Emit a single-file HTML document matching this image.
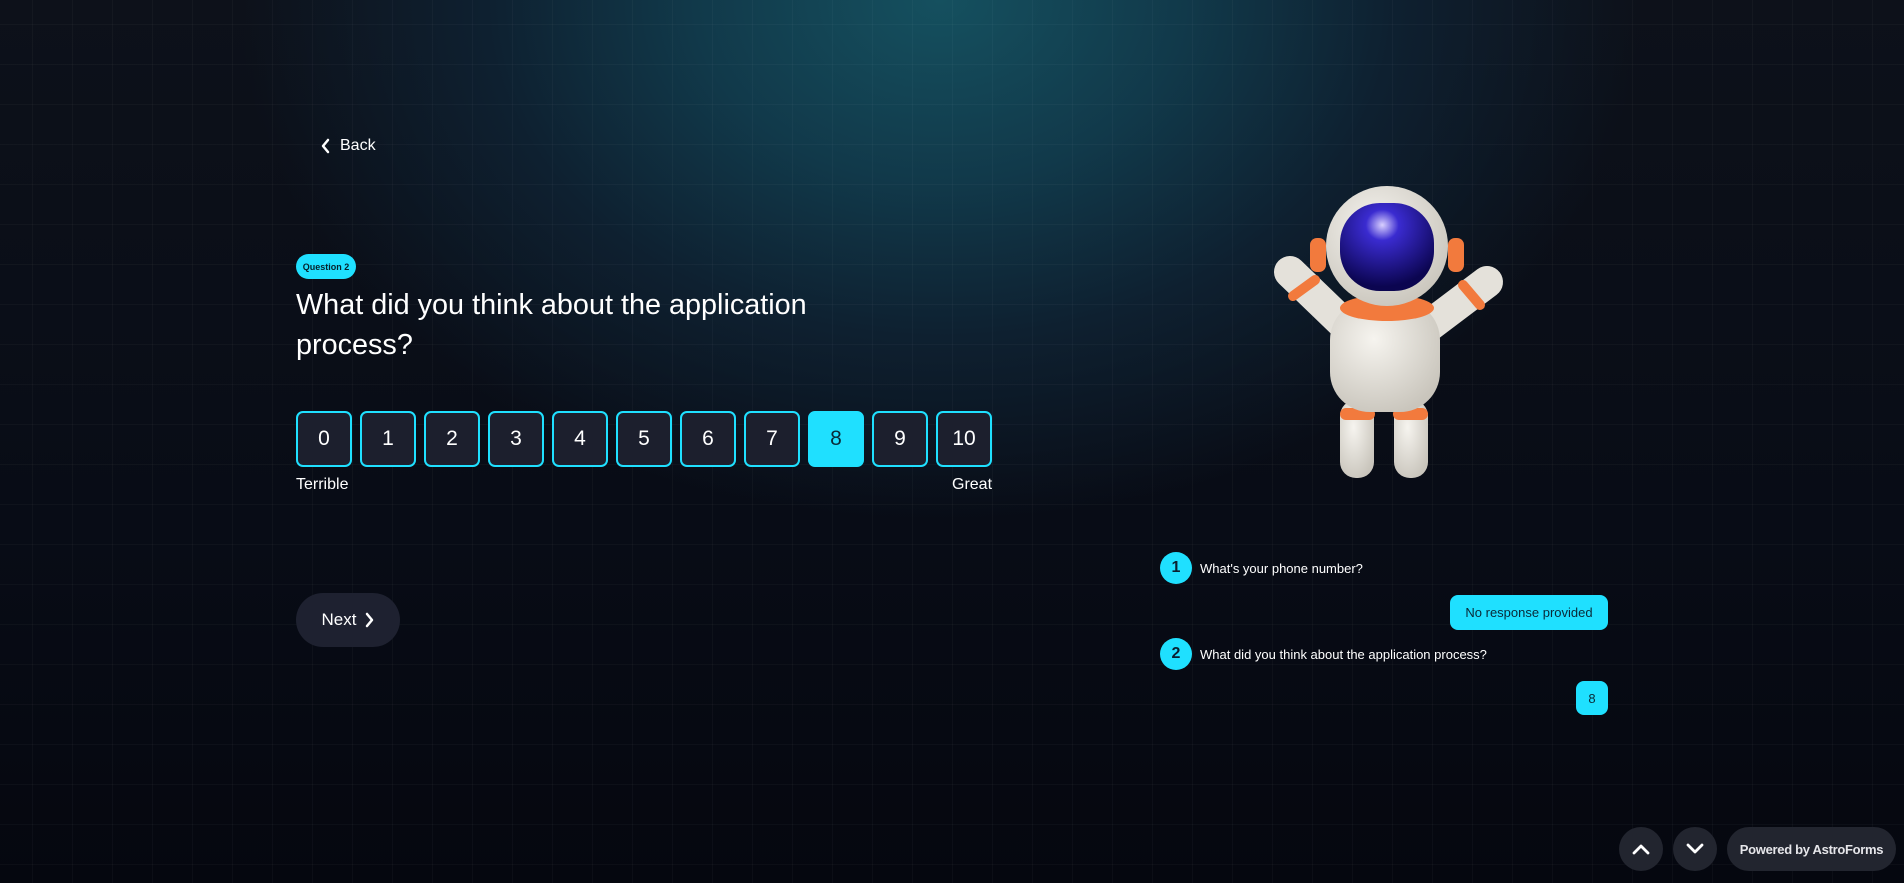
<!DOCTYPE html>
<html><head><meta charset="utf-8"><style>
*{box-sizing:border-box;margin:0;padding:0}
html,body{width:1904px;height:883px;overflow:hidden}
body{font-family:"Liberation Sans",sans-serif;color:#fff;position:relative;
background:
linear-gradient(rgba(255,255,255,0.028) 1px,transparent 1px) 0 24px/40px 40px,
linear-gradient(90deg,rgba(255,255,255,0.028) 1px,transparent 1px) 32px 0/40px 40px,
radial-gradient(ellipse 700px 520px at 940px 0px,#15505f 0%,#11394a 35%,#0e2030 65%,rgba(8,12,22,0) 100%),
linear-gradient(180deg,#0d111a 0%,#080c16 60%,#05070f 100%);}
.a{position:absolute}
.back{left:320px;top:137px;font-size:16px;display:flex;align-items:center;gap:8px}
.badge{left:296px;top:254px;width:60px;height:25px;border-radius:13px;background:#1fe0ff;color:#06202a;font-size:9px;font-weight:bold;display:flex;align-items:center;justify-content:center}
.title{left:296px;top:285px;font-size:28.8px;line-height:40px;width:580px}
.boxes{left:296px;top:411px;display:flex;gap:8px}
.box{width:56px;height:56px;border:2px solid #1fe0ff;border-radius:7px;background:#1c1f2d;display:flex;align-items:center;justify-content:center;font-size:21px}
.box.s{background:#1fe0ff;color:#0a2a38}
.lab{top:476px;font-size:16px}
.next{left:296px;top:593px;width:104px;height:54px;border-radius:27px;background:#1e2130;font-size:17px;display:flex;align-items:center;justify-content:center;gap:8px}
.num{width:32px;height:32px;border-radius:50%;background:#1fe0ff;color:#0a2030;font-weight:bold;font-size:16px;display:flex;align-items:center;justify-content:center}
.q{font-size:13px}
.bub{background:#1fe0ff;color:#0a2a38;border-radius:8px;font-size:13px;display:flex;align-items:center;justify-content:center}
.cb{width:44px;height:44px;border-radius:50%;background:#22252f;top:827px;display:flex;align-items:center;justify-content:center}
</style></head><body>
<div class="a back"><svg width="12" height="16" viewBox="0 0 12 16"><path d="M8 2 L3 8 L8 14" fill="none" stroke="#fff" stroke-width="2.5" stroke-linecap="round" stroke-linejoin="round"/></svg>Back</div>
<div class="a badge">Question 2</div>
<div class="a title">What did you think about the application process?</div>
<div class="a boxes">
<div class="box">0</div><div class="box">1</div><div class="box">2</div><div class="box">3</div><div class="box">4</div><div class="box">5</div><div class="box">6</div><div class="box">7</div><div class="box s">8</div><div class="box">9</div><div class="box">10</div></div>
<div class="a lab" style="left:296px">Terrible</div>
<div class="a lab" style="left:952px">Great</div>
<div class="a next">Next <svg width="10" height="16" viewBox="0 0 10 16"><path d="M3 2 L8 8 L3 14" fill="none" stroke="#fff" stroke-width="2.5" stroke-linecap="round" stroke-linejoin="round"/></svg></div>

<svg class="a" style="left:1270px;top:180px" width="240" height="305" viewBox="1270 180 240 305">
<defs>
<radialGradient id="w" cx="40%" cy="35%" r="70%"><stop offset="0" stop-color="#f6f4ef"/><stop offset="1" stop-color="#c9c5bc"/></radialGradient>
<radialGradient id="v" cx="45%" cy="25%" r="70%"><stop offset="0" stop-color="#d9d0ff"/><stop offset="0.25" stop-color="#3a2bd0"/><stop offset="1" stop-color="#0b0550"/></radialGradient>
</defs>
<line x1="1345" y1="325" x2="1290" y2="272" stroke="#e4e1da" stroke-width="32" stroke-linecap="round"/>
<line x1="1430" y1="325" x2="1487" y2="282" stroke="#e4e1da" stroke-width="32" stroke-linecap="round"/>
<line x1="1293" y1="296" x2="1315" y2="280" stroke="#f27a3d" stroke-width="10" stroke-linecap="round"/>
<line x1="1463" y1="285" x2="1480" y2="305" stroke="#f27a3d" stroke-width="10" stroke-linecap="round"/>
<rect x="1340" y="400" width="34" height="78" rx="16" fill="url(#w)"/>
<rect x="1394" y="400" width="34" height="78" rx="16" fill="url(#w)"/>
<rect x="1340" y="408" width="35" height="12" rx="6" fill="#f27a3d"/>
<rect x="1393" y="408" width="35" height="12" rx="6" fill="#f27a3d"/>
<rect x="1330" y="300" width="110" height="112" rx="40" fill="url(#w)"/>
<ellipse cx="1387" cy="308" rx="47" ry="13" fill="#f27a3d"/>
<rect x="1310" y="238" width="16" height="34" rx="7" fill="#f27a3d"/>
<rect x="1448" y="238" width="16" height="34" rx="7" fill="#f27a3d"/>
<ellipse cx="1387" cy="246" rx="61" ry="60" fill="url(#w)"/>
<rect x="1340" y="203" width="94" height="88" rx="40" fill="url(#v)"/>
</svg>

<div class="a num" style="left:1160px;top:552px">1</div>
<div class="a q" style="left:1200px;top:561px">What's your phone number?</div>
<div class="a bub" style="left:1450px;top:595px;width:158px;height:35px">No response provided</div>
<div class="a num" style="left:1160px;top:638px">2</div>
<div class="a q" style="left:1200px;top:647px">What did you think about the application process?</div>
<div class="a bub" style="left:1576px;top:681px;width:32px;height:34px">8</div>

<div class="a cb" style="left:1619px"><svg width="18" height="12" viewBox="0 0 18 12"><path d="M2 10 L9 3 L16 10" fill="none" stroke="#fff" stroke-width="2.8" stroke-linecap="round" stroke-linejoin="round"/></svg></div>
<div class="a cb" style="left:1673px"><svg width="18" height="12" viewBox="0 0 18 12"><path d="M2 2 L9 9 L16 2" fill="none" stroke="#fff" stroke-width="2.8" stroke-linecap="round" stroke-linejoin="round"/></svg></div>
<div class="a" style="left:1727px;top:827px;width:169px;height:44px;border-radius:22px;background:#22252f;font-size:13px;font-weight:bold;color:#e6e6ea;display:flex;align-items:center;justify-content:center;letter-spacing:-0.3px">Powered by AstroForms</div>
</body></html>
